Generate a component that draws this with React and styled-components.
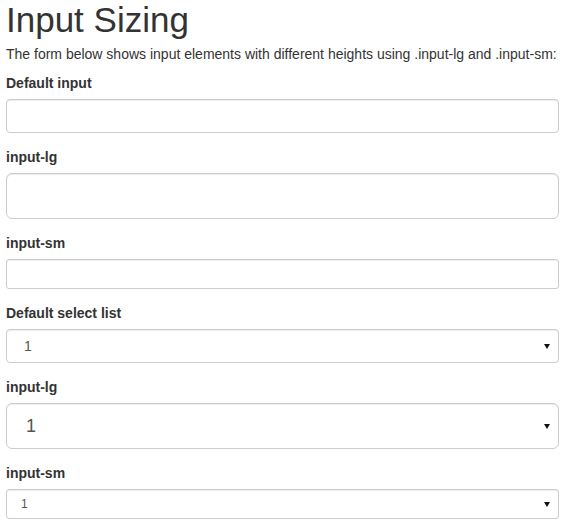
import React from "react";
import styled, { createGlobalStyle } from "styled-components";

const GlobalStyle = createGlobalStyle`
  body {
    margin: 0;
    background: #fff;
    font-family: "Liberation Sans", Arial, sans-serif;
    font-size: 14px;
    line-height: 1.42857;
    color: #333;
  }
`;

const Page = styled.div`
  padding: 0 8px 0 6px;
`;

const Title = styled.h2`
  margin: 0 0 5px;
  padding-top: 1px;
  font-size: 35px;
  font-weight: 400;
  line-height: 1.1;
  color: #333;
`;

const Intro = styled.p`
  margin: 0 0 10px;
`;

const Group = styled.div`
  margin-bottom: 15px;
`;

const Label = styled.label`
  display: block;
  margin-bottom: 5px;
  font-weight: 700;
`;

const sizes = {
  sm: { height: 30, pad: "5px 10px", font: 12, radius: 3, indent: 14 },
  md: { height: 34, pad: "6px 12px", font: 14, radius: 4, indent: 17 },
  lg: { height: 46, pad: "10px 16px", font: 18, radius: 6, indent: 19 },
};

const TextInput = styled.input`
  display: block;
  box-sizing: border-box;
  width: 100%;
  height: ${(p) => sizes[p.$size].height}px;
  padding: ${(p) => sizes[p.$size].pad};
  font-family: inherit;
  font-size: ${(p) => sizes[p.$size].font}px;
  color: #555;
  background: #fff;
  border: 1px solid #ccc;
  border-radius: ${(p) => sizes[p.$size].radius}px;
  box-shadow: inset 0 1px 1px rgba(0, 0, 0, 0.075);
  outline: none;
`;

const SelectWrap = styled.div`
  position: relative;

  &::after {
    content: "";
    position: absolute;
    right: 9px;
    top: 50%;
    margin-top: -2px;
    border-left: 3.5px solid transparent;
    border-right: 3.5px solid transparent;
    border-top: 5px solid #111;
    pointer-events: none;
  }
`;

const Select = styled.select`
  display: block;
  box-sizing: border-box;
  width: 100%;
  height: ${(p) => sizes[p.$size].height}px;
  padding: ${(p) => sizes[p.$size].pad};
  padding-left: ${(p) => sizes[p.$size].indent}px;
  font-family: inherit;
  font-size: ${(p) => sizes[p.$size].font}px;
  color: #555;
  background: #fff;
  border: 1px solid #ccc;
  border-radius: ${(p) => sizes[p.$size].radius}px;
  box-shadow: inset 0 1px 1px rgba(0, 0, 0, 0.075);
  appearance: none;
  -webkit-appearance: none;
  outline: none;
`;

const inputs = [
  { label: "Default input", size: "md" },
  { label: "input-lg", size: "lg" },
  { label: "input-sm", size: "sm" },
];

const selects = [
  { label: "Default select list", size: "md" },
  { label: "input-lg", size: "lg" },
  { label: "input-sm", size: "sm" },
];

const App = () => {
  return (
    <Page>
      <GlobalStyle />
      <Title>Input Sizing</Title>
      <Intro>
        The form below shows input elements with different heights using
        .input-lg and .input-sm:
      </Intro>
      <form>
        {inputs.map((f, i) => (
          <Group key={"in" + i}>
            <Label>{f.label}</Label>
            <TextInput type="text" $size={f.size} />
          </Group>
        ))}
        {selects.map((f, i) => (
          <Group key={"sel" + i}>
            <Label>{f.label}</Label>
            <SelectWrap>
              <Select $size={f.size}>
                <option>1</option>
                <option>2</option>
                <option>3</option>
                <option>4</option>
              </Select>
            </SelectWrap>
          </Group>
        ))}
      </form>
    </Page>
  );
};

export default App;
